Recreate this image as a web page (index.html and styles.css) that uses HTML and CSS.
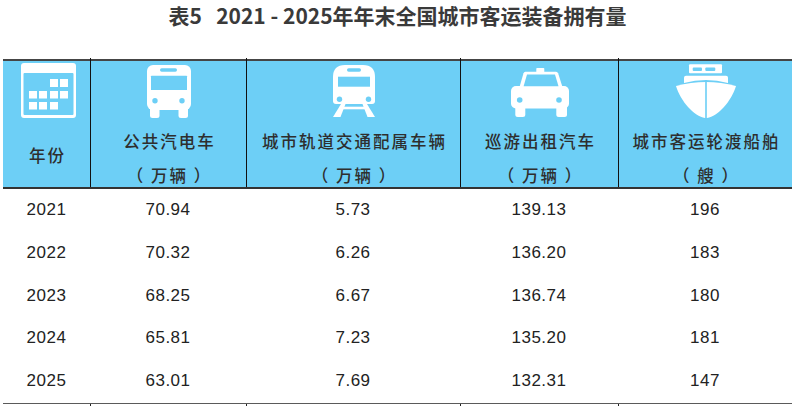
FILE: index.html
```html
<!DOCTYPE html>
<html lang="zh-CN">
<head>
<meta charset="utf-8">
<title>表5 2021 - 2025年年末全国城市客运装备拥有量</title>
<link rel="stylesheet" href="styles.css">
</head>
<body>
<h1 class="title">表5&nbsp;&nbsp; 2021 - 2025年年末全国城市客运装备拥有量</h1>
<div class="table">
  <div class="head">
    <div class="hcell year">
      <svg class="icon ic-cal" width="56" height="56" viewBox="0 0 56 56">
        <rect x="0" y="1" width="55" height="55" rx="3" fill="#fff"/>
        <rect x="2.5" y="11" width="50" height="42" rx="1" fill="#6dcff6"/>
        <g fill="#fff">
          <rect x="29" y="17" width="8" height="8"/><rect x="39" y="17" width="8" height="8"/>
          <rect x="8" y="29" width="8" height="7.5"/><rect x="18" y="29" width="8" height="7.5"/>
          <rect x="29" y="29" width="8" height="7.5"/><rect x="39" y="29" width="8" height="7.5"/>
          <rect x="8" y="40" width="8" height="7.5"/><rect x="18" y="40" width="8" height="7.5"/>
          <rect x="29" y="40" width="8" height="7.5"/>
        </g>
      </svg>
      <div class="htext single"><span>年份</span></div>
    </div>
    <div class="hcell">
      <svg class="icon" width="44" height="56" viewBox="0 0 44 56">
        <g fill="#fff">
          <rect x="0" y="3" width="44" height="45" rx="6"/>
          <rect x="3" y="40" width="9.5" height="16" rx="2.5"/>
          <rect x="31.5" y="40" width="9.5" height="16" rx="2.5"/>
        </g>
        <g fill="#6dcff6">
          <rect x="4" y="13.7" width="36" height="14.3" rx="0.5"/>
          <rect x="13" y="6.3" width="17" height="3.4" rx="1.7"/>
          <circle cx="8" cy="38.7" r="2.7"/>
          <circle cx="35" cy="38.7" r="2.7"/>
        </g>
      </svg>
      <div class="htext"><span>公共汽电车</span><span>（ 万辆 ）</span></div>
    </div>
    <div class="hcell">
      <svg class="icon" width="42" height="56" viewBox="0 0 42 56">
        <g fill="#fff">
          <path d="M0 39 L0 15 Q0 3 12 3 L30 3 Q42 3 42 15 L42 39 Q42 42 39 42 L3 42 Q0 42 0 39 Z"/>
          <rect x="9" y="44.7" width="24" height="2.6"/>
          <polygon points="8,42 12.5,42 7.5,55 0,55"/>
          <polygon points="34,42 29.5,42 34.5,55 42,55"/>
        </g>
        <g fill="#6dcff6">
          <rect x="5" y="14.7" width="32" height="10"/>
          <rect x="14" y="6.3" width="14" height="3.4" rx="1.7"/>
          <circle cx="6.5" cy="37.3" r="2.7"/>
          <circle cx="35.5" cy="37.3" r="2.7"/>
        </g>
      </svg>
      <div class="htext"><span>城市轨道交通配属车辆</span><span>（ 万辆 ）</span></div>
    </div>
    <div class="hcell">
      <svg class="icon" width="60" height="56" viewBox="0 0 60 56">
        <g fill="#fff">
          <rect x="26.3" y="6" width="8" height="4.5" rx="0.8"/>
          <path d="M15.3 9.7 L46 9.7 Q47.6 9.7 48.1 11.2 L52.5 25 L9.5 25 L13.5 11.2 Q14 9.7 15.3 9.7 Z"/>
          <rect x="1" y="24" width="58" height="22.5" rx="5"/>
          <rect x="5.3" y="41" width="10" height="14" rx="2.5"/>
          <rect x="46.3" y="41" width="10.7" height="14" rx="2.5"/>
        </g>
        <g fill="#6dcff6">
          <path d="M17 12.6 L45 12.6 L48.5 24.2 L13.6 24.2 Z"/>
          <circle cx="9.7" cy="38" r="2.8"/>
          <circle cx="49" cy="38" r="2.8"/>
        </g>
      </svg>
      <div class="htext"><span>巡游出租汽车</span><span>（ 万辆 ）</span></div>
    </div>
    <div class="hcell">
      <svg class="icon" width="60" height="56" viewBox="0 0 60 56">
        <g fill="#fff">
          <rect x="13" y="2.3" width="33" height="9" rx="1"/>
          <path d="M8 15.7 Q8 13.7 10 13.7 L50 13.7 Q52 13.7 52 15.7 L52 21 Q30 15 8 21 Z"/>
          <path d="M0 24 Q30 16 60 24 C55 40 42 54 31 56 L29 56 C18 54 5 40 0 24 Z"/>
        </g>
        <g fill="#6dcff6">
          <rect x="16.7" y="5.6" width="9.3" height="3.4" rx="1"/>
          <rect x="29.3" y="5.6" width="10" height="3.4" rx="1"/>
          <rect x="29.2" y="18" width="1.6" height="38"/>
        </g>
      </svg>
      <div class="htext"><span>城市客运轮渡船舶</span><span>（ 艘 ）</span></div>
    </div>
  </div>
  <div class="row"><div class="cell">2021</div><div class="cell">70.94</div><div class="cell">5.73</div><div class="cell">139.13</div><div class="cell">196</div></div>
  <div class="row"><div class="cell">2022</div><div class="cell">70.32</div><div class="cell">6.26</div><div class="cell">136.20</div><div class="cell">183</div></div>
  <div class="row"><div class="cell">2023</div><div class="cell">68.25</div><div class="cell">6.67</div><div class="cell">136.74</div><div class="cell">180</div></div>
  <div class="row"><div class="cell">2024</div><div class="cell">65.81</div><div class="cell">7.23</div><div class="cell">135.20</div><div class="cell">181</div></div>
  <div class="row last"><div class="cell">2025</div><div class="cell">63.01</div><div class="cell">7.69</div><div class="cell">132.31</div><div class="cell">147</div></div>
</div>
</body>
</html>
```

FILE: styles.css
```css
html, body {
  margin: 0;
  padding: 0;
  background: #fff;
}
body {
  width: 795px;
  height: 410px;
  overflow: hidden;
}
.title {
  margin: 0;
  box-sizing: border-box;
  height: 59px;
  padding-top: 0;
  line-height: 30px;
  text-align: center;
  font-family: "Noto Sans CJK SC", sans-serif;
  font-weight: 700;
  font-size: 21px;
  color: #3a3a3a;
}
.table {
  margin-left: 3px;
  width: 789px;
}
.head,
.row {
  display: grid;
  grid-template-columns: 87px 156px 214px 158px 174px;
}
.head {
  height: 130px;
  box-sizing: border-box;
  background: #6dcff6;
  border-top: 2px solid #454545;
  border-bottom: 2px solid #333;
}
.hcell {
  position: relative;
  display: flex;
  flex-direction: column;
  align-items: center;
  padding-top: 1px;
}
.hcell + .hcell {
  border-left: 1px solid #111;
}
.hcell + .hcell::before {
  content: "";
  position: absolute;
  left: -1px;
  top: -3px;
  width: 1px;
  height: 3px;
  background: #111;
}
.icon {
  display: block;
}
.ic-cal {
  margin-left: 4px;
}
.htext {
  margin-top: 12.5px;
  display: flex;
  flex-direction: column;
  align-items: center;
  gap: 14px;
  font-family: "Noto Sans CJK SC", sans-serif;
  font-weight: 500;
  font-size: 16.5px;
  line-height: 20px;
  letter-spacing: 2px;
  color: #2e2e2e;
}
.htext span {
  padding-left: 2px;
  white-space: pre;
}
.htext.single {
  margin-top: 27px;
}
.row {
  height: 42.8px;
  line-height: 42.8px;
  text-align: center;
  font-family: "Liberation Sans", Arial, sans-serif;
  font-size: 17px;
  letter-spacing: 0.5px;
  color: #222;
}
.row.last {
  border-bottom: 1.5px solid #5a5a5a;
}
.cell {
  position: relative;
}
.row.last .cell + .cell::after {
  content: "";
  position: absolute;
  left: 0;
  bottom: -3px;
  width: 1px;
  height: 2px;
  background: #222;
}
```
